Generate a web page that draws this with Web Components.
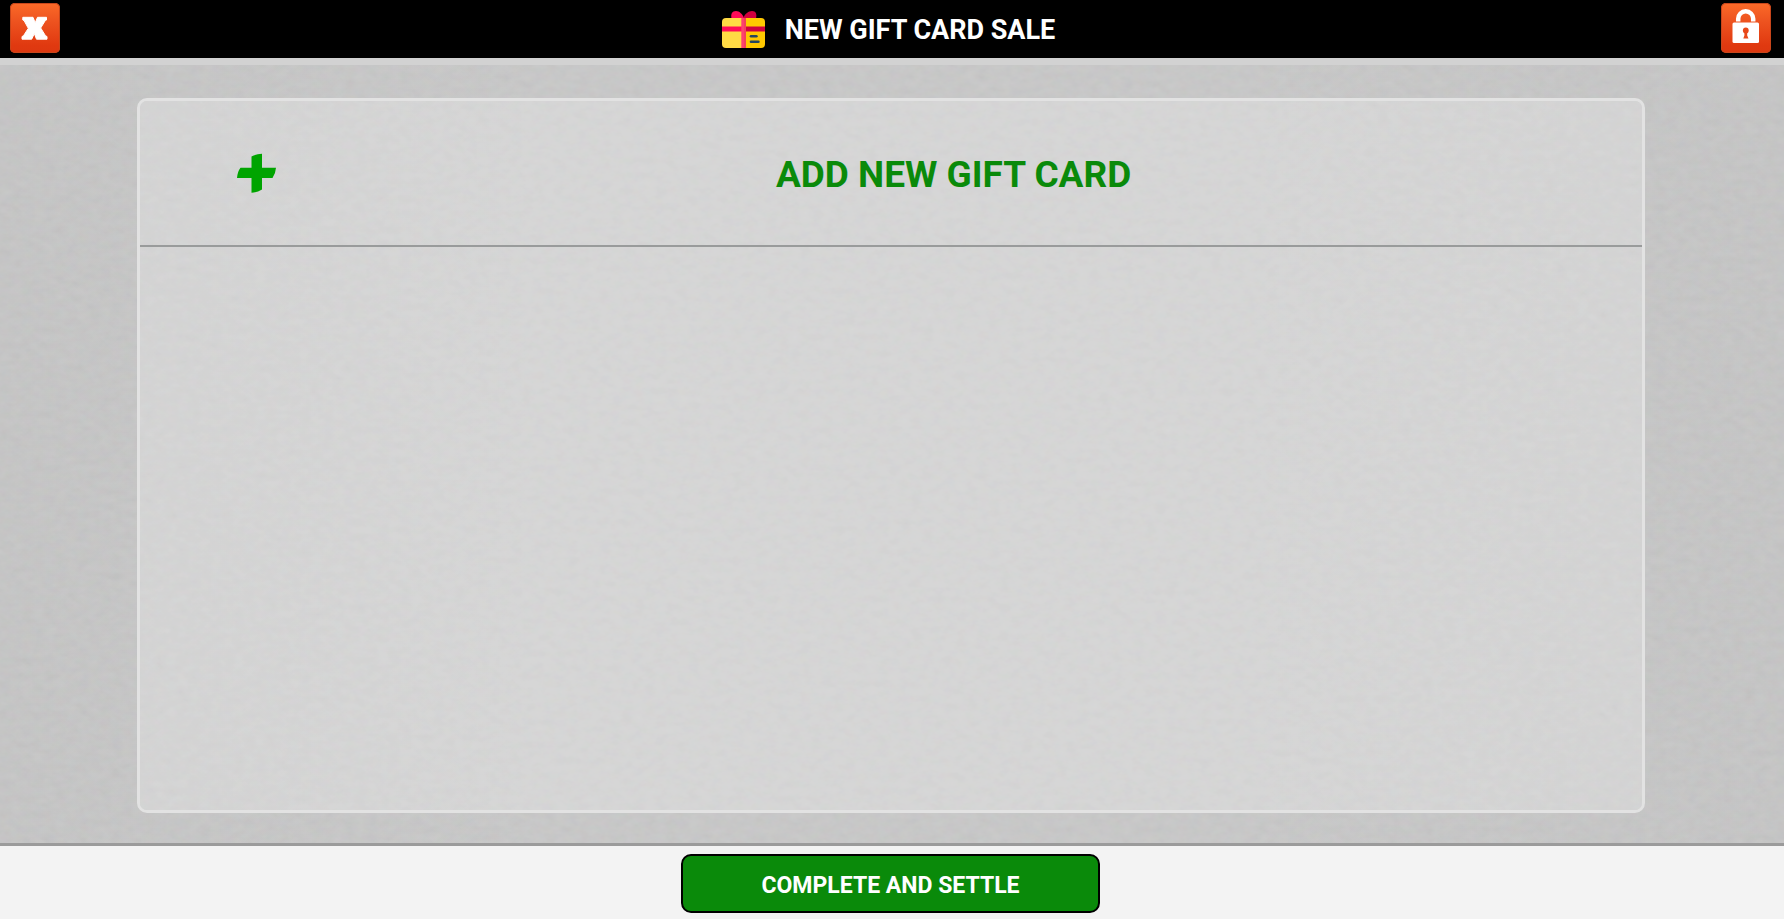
<!DOCTYPE html>
<html lang="en">
<head>
<meta charset="utf-8">
<meta name="viewport" content="width=device-width, initial-scale=1">
<title>New Gift Card Sale</title>
<style>
html, body { margin: 0; height: 100%; }
body { font-family: Roboto, "Liberation Sans", sans-serif; font-weight: 700; background: #f3f3f3; }
</style>
</head>
<body>
<sale-screen>
  <screen-header slot="header">
    <icon-button slot="start" label="Close">
      <svg viewBox="0 0 50 50" width="50" height="50" aria-hidden="true"><path fill="#fff" stroke="#fff" stroke-width="1" stroke-linejoin="round" d="M12.800 14.300H23L25.200 19.800L27.500 14.300H36.500V17L35.300 17.500L30.700 25L35.600 32.900L37 33.500V36.200H26.500L24.300 30.600L21.700 36.200H12V33.500L13.400 32.900L18.300 25.300L14 17.500L12.800 17Z"/></svg>
    </icon-button>
    <gift-icon></gift-icon>
    <span>NEW GIFT CARD SALE</span>
    <icon-button slot="end" label="Lock">
      <svg viewBox="0 0 50 50" width="50" height="50" aria-hidden="true"><path d="M17.200 18.500V15.800A7.500 7.500 0 0 1 32.200 15.800V18.500" fill="none" stroke="#fff" stroke-width="4.500"/><rect x="11.500" y="19.500" width="26.500" height="20.500" rx="1.500" fill="#fff"/><circle cx="24.800" cy="27.500" r="2.900" fill="#e8481a"/><path d="M23.400 28H26.200V32.500L27.500 35.500H22.300L23.400 32.500Z" fill="#e8481a"/></svg>
    </icon-button>
  </screen-header>
  <card-list>
    <add-row>ADD NEW GIFT CARD</add-row>
  </card-list>
  <action-bar slot="footer">COMPLETE AND SETTLE</action-bar>
</sale-screen>
<script>
function define(name, html, setup) {
  const template = document.createElement('template');
  template.innerHTML = html;
  customElements.define(name, class extends HTMLElement {
    constructor() {
      super();
      this.attachShadow({ mode: 'open' }).append(template.content.cloneNode(true));
    }
    connectedCallback() { if (setup) setup(this); }
  });
}

define('sale-screen', `
<style>
:host { display: flex; flex-direction: column; min-height: 100vh; }
main { position: relative; isolation: isolate; flex: 1; display: flex; box-sizing: border-box;
  padding: 33px 139px 30px 137px;
  background: linear-gradient(90deg, #c2c2c2, #c5c5c5 30%, #c5c5c5 70%, #c2c2c2); }
.grain { position: absolute; inset: 0; width: 100%; height: 100%; z-index: -1; opacity: .1; }
</style>
<slot name="header"></slot>
<main>
  <svg class="grain" aria-hidden="true">
    <filter id="grain" x="0" y="0" width="100%" height="100%">
      <feTurbulence type="fractalNoise" baseFrequency=".09 .13" numOctaves="3" seed="4"/>
      <feColorMatrix values=".6 .15 .15 0 .28  .15 .6 .15 0 .28  .15 .15 .6 0 .28  0 0 0 0 1"/>
    </filter>
    <rect width="100%" height="100%" filter="url(#grain)"/>
  </svg>
  <slot></slot>
</main>
<slot name="footer"></slot>`);

define('screen-header', `
<style>
:host { display: block; }
header { display: grid; grid-template-columns: 1fr auto 1fr; align-items: center; height: 58px;
  padding: 0 13px 0 10px; background: #000; border-bottom: 7px solid #d2d2d2; color: #fff; }
.start, .end { display: flex; padding-bottom: 2px; }
.end { justify-content: flex-end; }
h1 { display: flex; align-items: center; gap: 19px; margin: 0; padding: 1px 4px 0 0; font-size: 27px; line-height: 32px; font-weight: inherit; }
</style>
<header><div class="start"><slot name="start"></slot></div><h1><slot></slot></h1><div class="end"><slot name="end"></slot></div></header>`);

define('icon-button', `
<style>
:host { display: block; }
button { display: block; width: 50px; height: 50px; padding: 0; border: 0; border-radius: 5px; cursor: pointer;
  background: linear-gradient(#fb6a28, #ee5420 35%, #e03910 85%, #dc3810); box-shadow: inset 0 0 0 1px #c8461b; }
</style>
<button type="button"><slot></slot></button>`,
host => host.shadowRoot.querySelector('button').setAttribute('aria-label', host.getAttribute('label')));

define('gift-icon', `
<style>:host, svg { display: block; }</style>
<svg width="44" height="38" viewBox="0 0 44 38" aria-hidden="true">
  <path fill="#ff0a58" d="M9.500 7.500C8.500 3 10 0 14 0C17.500 0 20 3 21.700 6L22 7.500Z"/>
  <path fill="#d0003f" d="M34 7.500C35 3 34 0 30 0C26.500 0 23 3 21.700 6V7.500Z"/>
  <path fill="#ffda44" d="M4 7H22V37H4A4 4 0 0 1 0 33V11A4 4 0 0 1 4 7Z"/>
  <path fill="#ffc800" d="M22 7H39A4 4 0 0 1 43 11V33A4 4 0 0 1 39 37H22Z"/>
  <path fill="#ff0a58" d="M0 15.500H22V20.500H0Z"/>
  <path fill="#d0003f" d="M22 15.500H43V20.500H22Z"/>
  <path fill="#ff4070" d="M19.300 7H22V37H19.300Z"/>
  <path fill="#f4405a" d="M22 7H24V37H22Z"/>
  <rect x="27.700" y="24" width="8" height="2.600" rx="1.300" fill="#24455f"/>
  <rect x="27.700" y="29.500" width="10" height="2.600" rx="1.300" fill="#24455f"/>
</svg>`);

define('card-list', `
<style>
:host { display: block; flex: 1; box-sizing: border-box; border: 3px solid #e2e2e2; border-radius: 10px;
  background: rgba(255,255,255,.25); background-clip: padding-box; }
</style>
<slot></slot>`);

define('add-row', `
<style>
:host { display: block; }
button { display: grid; grid-template-columns: 13fr 65fr 6fr; align-items: center; width: 100%; height: 146px;
  box-sizing: border-box; padding: 0; border: 0; border-bottom: 2px solid #999b9b; background: none;
  font: inherit; font-size: 37px; line-height: 44px; color: #0a8a0a; cursor: pointer; }
svg { display: block; justify-self: center; }
span { padding-top: 4px; }
</style>
<button type="button">
  <svg width="40" height="40" viewBox="0 0 40 40" aria-hidden="true"><path fill="#00a400" d="M15.500 3.500Q20 1 26 .8V14.700H40Q39.500 21 36.500 25H26V36.500Q21 39.500 15.500 39.700V25H1Q1.500 18.500 4.500 14.700H15.500Z"/></svg>
  <span><slot></slot></span>
</button>`);

define('action-bar', `
<style>
:host { display: block; }
footer { display: flex; justify-content: center; padding: 8px 3px 6px 0; background: #f3f3f3; border-top: 3px solid #9b9b9b; }
button { width: 419px; height: 59px; box-sizing: border-box; padding: 4px 0 0; border: 2px solid #000; border-radius: 10px;
  background: #0a8a0a; color: #fff; font: inherit; font-size: 23px; line-height: 28px; cursor: pointer; }
</style>
<footer><button type="button"><slot></slot></button></footer>`);
</script>
</body>
</html>
